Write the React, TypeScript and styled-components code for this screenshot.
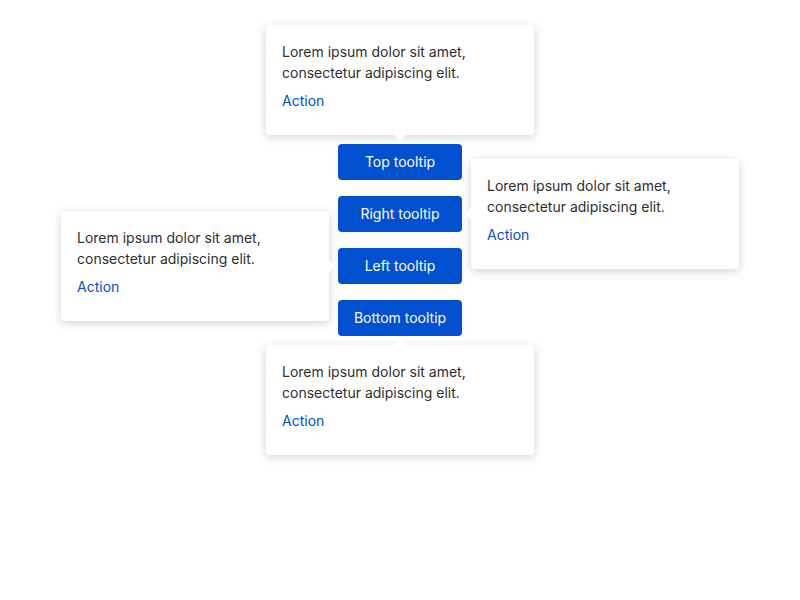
import React from "react";
import styled, { createGlobalStyle, css } from "styled-components";

type Side = "top" | "right" | "bottom" | "left";

const GlobalStyle = createGlobalStyle`
  html, body {
    margin: 0;
    padding: 0;
    background: #ffffff;
    font-family: Inter, "Noto Sans", sans-serif;
  }
`;

const Page = styled.div`
  width: 800px;
  height: 600px;
  display: flex;
  justify-content: center;
  padding-top: 144px;
  box-sizing: border-box;
`;

const Column = styled.div`
  display: flex;
  flex-direction: column;
  gap: 16px;
`;

const Anchor = styled.div`
  position: relative;
`;

const Button = styled.button`
  width: 124px;
  height: 36px;
  padding: 0 0 1px;
  border: none;
  border-radius: 4px;
  background: #0050cf;
  color: #ffffff;
  font-family: Inter, "Noto Sans", sans-serif;
  font-size: 14px;
  line-height: 20px;
  cursor: pointer;
`;

const placement = {
  top: css`
    bottom: calc(100% + 9px);
    left: 50%;
    transform: translateX(-50%);
  `,
  bottom: css`
    top: calc(100% + 9px);
    left: 50%;
    transform: translateX(-50%);
  `,
  right: css`
    left: calc(100% + 9px);
    top: 50%;
    transform: translateY(-50%);
  `,
  left: css`
    right: calc(100% + 9px);
    top: 50%;
    transform: translateY(-50%);
  `,
};

const arrow = {
  top: css`
    top: 100%;
    left: 50%;
    margin-left: -6px;
    border-width: 6px 6px 0 6px;
    border-color: #ffffff transparent transparent transparent;
  `,
  bottom: css`
    bottom: 100%;
    left: 50%;
    margin-left: -6px;
    border-width: 0 6px 6px 6px;
    border-color: transparent transparent #ffffff transparent;
  `,
  right: css`
    right: 100%;
    top: 50%;
    margin-top: -6px;
    border-width: 6px 6px 6px 0;
    border-color: transparent #ffffff transparent transparent;
  `,
  left: css`
    left: 100%;
    top: 50%;
    margin-top: -6px;
    border-width: 6px 0 6px 6px;
    border-color: transparent transparent transparent #ffffff;
  `,
};

const Tip = styled.div<{ $side: Side }>`
  position: absolute;
  ${(p) => placement[p.$side]}
  width: 268px;
  height: 110px;
  box-sizing: border-box;
  padding: 16px 16px 24px;
  background: #ffffff;
  border-radius: 4px;
  box-shadow: 0 2px 10px rgba(0, 0, 0, 0.18);
  z-index: 1;

  &::after {
    content: "";
    position: absolute;
    width: 0;
    height: 0;
    border-style: solid;
    ${(p) => arrow[p.$side]}
  }
`;

const Text = styled.p`
  margin: 0;
  font-size: 14px;
  line-height: 21px;
  color: #2e2e2e;
`;

const Action = styled.a`
  display: inline-block;
  margin-top: 7px;
  font-size: 14px;
  line-height: 21px;
  color: #0050cf;
  text-decoration: none;
  cursor: pointer;
`;

const Tooltip: React.FC<{ side: Side }> = ({ side }) => (
  <Tip $side={side}>
    <Text>
      Lorem ipsum dolor sit amet,
      <br />
      consectetur adipiscing elit.
    </Text>
    <Action>Action</Action>
  </Tip>
);

const items: { label: string; side: Side }[] = [
  { label: "Top tooltip", side: "top" },
  { label: "Right tooltip", side: "right" },
  { label: "Left tooltip", side: "left" },
  { label: "Bottom tooltip", side: "bottom" },
];

export default function App() {
  return (
    <>
      <GlobalStyle />
      <Page>
        <Column>
          {items.map((item) => (
            <Anchor key={item.side}>
              <Button>{item.label}</Button>
              <Tooltip side={item.side} />
            </Anchor>
          ))}
        </Column>
      </Page>
    </>
  );
}
